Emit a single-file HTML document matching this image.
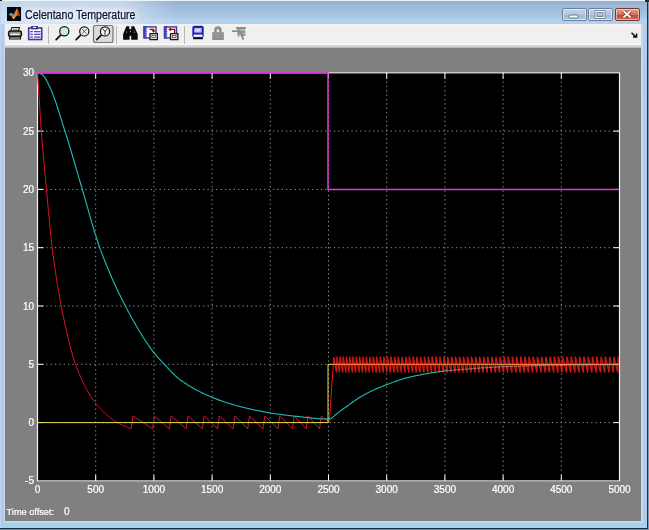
<!DOCTYPE html>
<html><head><meta charset="utf-8"><title>Celentano Temperature</title>
<style>
html,body{margin:0;padding:0;}
body{width:649px;height:530px;overflow:hidden;position:relative;background:#b4d0ee;font-family:"Liberation Sans",sans-serif;}
#frame{position:absolute;left:0;top:0;width:649px;height:530px;background:linear-gradient(#9bb0cc 0px,#9bb2cf 4px,#9cb7d8 5px,#a3c0de 12px,#a9c7e4 17px,#b1cfeb 19px,#b2d1ee 24px,#aecdeb 60px,#acceec 522px,#a4d2ec 527px);}
#bottomline{position:absolute;left:0;top:528px;width:649px;height:1px;background:#16303c;}
#bottomline2{position:absolute;left:0;top:529px;width:649px;height:1px;background:#6e8aa0;}
#rightline{position:absolute;left:647px;top:2px;width:1px;height:527px;background:#1c3444;}
#rightline2{position:absolute;left:648px;top:2px;width:1px;height:528px;background:#7e9ab0;}
#tl{position:absolute;left:0;top:0;width:2px;height:1px;background:#1a2a20;}
#tr{position:absolute;left:645px;top:0;width:4px;height:2px;background:#1c2a3a;}
#topline{position:absolute;left:2px;top:0;width:643px;height:1px;background:#e8f6fa;}
#leftedge{position:absolute;left:0;top:1px;width:1px;height:527px;background:#c2d4f0;}
#innerL{position:absolute;left:3.500px;top:24px;width:1.500px;height:498px;background:#c4d8f0;}
#innerR{position:absolute;left:641px;top:24px;width:2px;height:498px;background:#c4d8f0;}
#innerB{position:absolute;left:4px;top:521px;width:639px;height:2px;background:#c4d8f0;}
#glow{position:absolute;left:1px;top:1px;width:175px;height:23px;background:linear-gradient(90deg,rgba(225,235,248,.62) 0px,rgba(225,235,248,.62) 120px,rgba(225,235,248,0) 175px);}
#title{position:absolute;left:25px;top:7.5px;font-size:12.5px;line-height:15px;color:#0c1030;white-space:nowrap;opacity:0.99;transform:scaleX(0.847);-webkit-text-stroke:0.25px #0c1030;transform-origin:0 0;text-shadow:0 0 5px #fff,0 0 8px #fff,0 0 10px rgba(255,255,255,.9),0 0 14px rgba(255,255,255,.7);}
.cb{position:absolute;top:8px;height:11px;border:1px solid #6f83a0;border-radius:2px;box-shadow:inset 0 0 0 1px rgba(255,255,255,.5);}
#bmin{left:562px;width:23px;background:linear-gradient(#c3d3e6 0%,#b3c7de 50%,#9db6d4 51%,#afc7e0 100%);}
#bmax{left:588px;width:23px;background:linear-gradient(#c3d3e6 0%,#b3c7de 50%,#9db6d4 51%,#afc7e0 100%);}
#bclose{left:615px;width:23px;border-color:#7a3a34;background:linear-gradient(#e2a090 0%,#d4705c 50%,#c2452e 51%,#d06a50 100%);}
#toolbar{position:absolute;left:5px;top:24px;width:636px;height:21px;background:linear-gradient(#f4f2f2 0px,#f2eeec 4px,#f0f0f0 9px,#f0f0f0 19px,#fafafa 20px);}
#tbshadow{position:absolute;left:5px;top:45px;width:636px;height:3px;background:linear-gradient(#dcdcdc,#d2d2d2 66%,#a0a0a0);}
#fig{position:absolute;left:5px;top:48px;width:636px;height:473px;background:#808080;}
#plot{position:absolute;left:0;top:0;}
#icons{position:absolute;left:0;top:0;}
</style></head><body>
<div id="frame"></div><div id="topline"></div><div id="leftedge"></div><div id="bottomline"></div><div id="bottomline2"></div><div id="rightline"></div><div id="rightline2"></div><div id="innerL"></div><div id="innerR"></div><div id="innerB"></div><div id="tl"></div><div id="tr"></div>

<div id="glow"></div>
<div id="title">Celentano Temperature</div>
<div class="cb" id="bmin"></div><div class="cb" id="bmax"></div><div class="cb" id="bclose"></div>
<div id="toolbar"></div><div id="tbshadow"></div>
<div id="fig"></div>
<svg id="plot" width="649" height="530" viewBox="0 0 649 530">
<defs><filter id="gs" x="0" y="0" width="100%" height="100%" filterUnits="userSpaceOnUse" color-interpolation-filters="sRGB"><feColorMatrix type="saturate" values="0"/></filter><clipPath id="pc"><rect x="37" y="72" width="582" height="409.500"/></clipPath></defs>
<rect x="37" y="72.3" width="583" height="409.1" fill="#000"/>
<g stroke="#fff" stroke-width="1" stroke-dasharray="1.2 3.16" opacity="0.62"><line x1="95.7" y1="72.8" x2="95.7" y2="480.9"/><line x1="153.9" y1="72.8" x2="153.9" y2="480.9"/><line x1="212.1" y1="72.8" x2="212.1" y2="480.9"/><line x1="270.3" y1="72.8" x2="270.3" y2="480.9"/><line x1="328.5" y1="72.8" x2="328.5" y2="480.9"/><line x1="386.7" y1="72.8" x2="386.7" y2="480.9"/><line x1="444.9" y1="72.8" x2="444.9" y2="480.9"/><line x1="503.1" y1="72.8" x2="503.1" y2="480.9"/><line x1="561.3" y1="72.8" x2="561.3" y2="480.9"/><line x1="37.5" y1="422.6" x2="619.5" y2="422.6"/><line x1="37.5" y1="364.3" x2="619.5" y2="364.3"/><line x1="37.5" y1="306.0" x2="619.5" y2="306.0"/><line x1="37.5" y1="247.7" x2="619.5" y2="247.7"/><line x1="37.5" y1="189.4" x2="619.5" y2="189.4"/><line x1="37.5" y1="131.1" x2="619.5" y2="131.1"/></g>
<rect x="37.5" y="72.8" width="582" height="408.09999999999997" fill="none" stroke="#f0f0f0" stroke-width="1.2"/>
<g stroke="#fff" stroke-width="1"><line x1="95.7" y1="480.9" x2="95.7" y2="474.9"/><line x1="95.7" y1="72.8" x2="95.7" y2="78.8"/><line x1="153.9" y1="480.9" x2="153.9" y2="474.9"/><line x1="153.9" y1="72.8" x2="153.9" y2="78.8"/><line x1="212.1" y1="480.9" x2="212.1" y2="474.9"/><line x1="212.1" y1="72.8" x2="212.1" y2="78.8"/><line x1="270.3" y1="480.9" x2="270.3" y2="474.9"/><line x1="270.3" y1="72.8" x2="270.3" y2="78.8"/><line x1="328.5" y1="480.9" x2="328.5" y2="474.9"/><line x1="328.5" y1="72.8" x2="328.5" y2="78.8"/><line x1="386.7" y1="480.9" x2="386.7" y2="474.9"/><line x1="386.7" y1="72.8" x2="386.7" y2="78.8"/><line x1="444.9" y1="480.9" x2="444.9" y2="474.9"/><line x1="444.9" y1="72.8" x2="444.9" y2="78.8"/><line x1="503.1" y1="480.9" x2="503.1" y2="474.9"/><line x1="503.1" y1="72.8" x2="503.1" y2="78.8"/><line x1="561.3" y1="480.9" x2="561.3" y2="474.9"/><line x1="561.3" y1="72.8" x2="561.3" y2="78.8"/><line x1="37.5" y1="422.6" x2="43.5" y2="422.6"/><line x1="619.5" y1="422.6" x2="613.5" y2="422.6"/><line x1="37.5" y1="364.3" x2="43.5" y2="364.3"/><line x1="619.5" y1="364.3" x2="613.5" y2="364.3"/><line x1="37.5" y1="306.0" x2="43.5" y2="306.0"/><line x1="619.5" y1="306.0" x2="613.5" y2="306.0"/><line x1="37.5" y1="247.7" x2="43.5" y2="247.7"/><line x1="619.5" y1="247.7" x2="613.5" y2="247.7"/><line x1="37.5" y1="189.4" x2="43.5" y2="189.4"/><line x1="619.5" y1="189.4" x2="613.5" y2="189.4"/><line x1="37.5" y1="131.1" x2="43.5" y2="131.1"/><line x1="619.5" y1="131.1" x2="613.5" y2="131.1"/></g>
<g clip-path="url(#pc)">
<polyline points="37.5,72.8 38.3,85.0 39.1,97.4 39.9,109.7 40.6,121.5 41.4,132.2 42.2,142.1 43.0,151.5 43.8,160.4 44.6,169.1 45.4,177.5 46.1,185.9 46.9,194.4 47.7,203.1 48.5,211.7 49.3,220.2 50.1,228.4 50.9,236.1 51.6,243.3 52.4,249.8 53.2,255.9 54.0,261.7 54.8,267.3 55.6,272.7 56.4,277.9 57.1,282.9 57.9,287.7 58.7,292.3 59.5,296.7 60.3,301.0 61.1,305.1 61.8,309.0 62.6,313.0 63.4,316.8 64.2,320.6 65.0,324.3 65.8,327.9 66.6,331.5 67.3,334.9 68.1,338.3 68.9,341.5 69.7,344.7 70.5,347.7 71.3,350.6 72.1,353.4 72.8,356.1 73.6,358.7 74.4,361.1 75.2,363.3 76.0,365.4 76.8,367.5 77.6,369.5 78.3,371.5 79.1,373.4 79.9,375.3 80.7,377.1 81.5,378.9 82.3,380.6 83.1,382.3 83.8,384.0 84.6,385.6 85.4,387.1 86.2,388.6 87.0,390.1 87.8,391.5 88.6,392.9 89.3,394.2 90.1,395.5 90.9,396.7 91.7,397.9 92.5,399.1 93.3,400.2 94.1,401.2 94.8,402.3 95.6,403.2 96.4,404.2 97.2,405.1 98.0,406.0 98.8,406.9 99.6,407.8 100.3,408.6 101.1,409.4 101.9,410.3 102.7,411.0 103.5,411.8 104.3,412.6 105.0,413.3 105.8,414.0 106.6,414.7 107.4,415.4 108.2,416.0 109.0,416.7 109.8,417.3 110.5,417.9 111.3,418.5 112.1,419.1 112.9,419.7 113.7,420.2 114.5,420.7 115.3,421.2 116.0,421.7 116.8,422.2 117.6,422.7 118.4,423.1 119.2,423.6 120.0,424.0 120.8,424.4 121.5,424.7 122.3,425.1 123.1,425.4 123.9,425.8 124.7,426.1 125.5,426.4 126.3,426.8 127.0,427.1 127.8,427.4 128.6,427.7 129.4,428.1 130.2,428.4 131.0,428.8 133.0,416.0 152.6,428.8 154.4,416.0 169.3,428.8 171.1,416.0 186.2,428.8 188.0,416.0 202.4,428.8 204.2,416.0 217.6,428.8 219.4,416.0 233.1,428.8 234.9,416.0 247.7,428.8 249.5,416.0 263.0,428.8 264.8,416.0 277.9,428.8 279.7,416.0 292.5,428.8 294.3,416.0 306.2,428.8 308.0,416.0 319.5,428.8 321.3,416.0 329.3,422.0 333.8,357.3" fill="none" stroke="#dc1424" stroke-width="1" stroke-linejoin="bevel"/>
<polyline points="333.8,357.3 336.4,372.5 336.9,356.6 339.5,372.5 340.0,356.6 342.7,372.5 343.2,356.6 345.9,372.5 346.4,356.6 349.1,372.5 349.6,356.6 352.4,372.5 352.9,356.6 355.7,372.5 356.2,356.6 359.1,372.5 359.6,356.6 362.4,372.5 362.9,356.6 365.8,372.5 366.3,356.6 369.3,372.5 369.8,356.6 372.7,372.5 373.2,356.6 376.2,372.5 376.7,356.6 379.7,372.5 380.2,356.6 383.3,372.5 383.8,356.6 386.8,372.5 387.3,356.6 390.4,372.5 390.9,356.6 394.1,372.5 394.6,356.6 397.7,372.5 398.2,356.6 401.4,372.5 401.9,356.6 405.1,372.5 405.6,356.6 408.8,372.5 409.3,356.6 412.6,372.5 413.1,356.6 416.3,372.5 416.8,356.6 420.1,372.5 420.6,356.6 423.9,372.5 424.4,356.6 427.8,372.5 428.3,356.6 431.6,372.5 432.1,356.6 435.5,372.5 436.0,356.6 439.4,372.5 439.9,356.6 443.3,372.5 443.8,356.6 447.2,372.5 447.7,356.6 451.1,372.5 451.6,356.6 455.1,372.5 455.6,356.6 459.0,372.5 459.5,356.6 463.0,372.5 463.5,356.6 467.0,372.5 467.5,356.6 471.0,372.5 471.5,356.6 475.1,372.5 475.6,356.6 479.1,372.5 479.6,356.6 483.2,372.5 483.7,356.6 487.2,372.5 487.7,356.6 491.3,372.5 491.8,356.6 495.4,372.5 495.9,356.6 499.5,372.5 500.0,356.6 503.6,372.5 504.1,356.6 507.7,372.5 508.2,356.6 511.9,372.5 512.4,356.6 516.0,372.5 516.5,356.6 520.2,372.5 520.7,356.6 524.3,372.5 524.8,356.6 528.5,372.5 529.0,356.6 532.7,372.5 533.2,356.6 536.9,372.5 537.4,356.6 541.1,372.5 541.6,356.6 545.3,372.5 545.8,356.6 549.5,372.5 550.0,356.6 553.7,372.5 554.2,356.6 557.9,372.5 558.4,356.6 562.1,372.5 562.6,356.6 566.4,372.5 566.9,356.6 570.6,372.5 571.1,356.6 574.9,372.5 575.4,356.6 579.1,372.5 579.6,356.6 583.4,372.5 583.9,356.6 587.7,372.5 588.2,356.6 591.9,372.5 592.4,356.6 596.2,372.5 596.7,356.6 600.5,372.5 601.0,356.6 604.8,372.5 605.3,356.6 609.1,372.5 609.6,356.6 613.4,372.5 613.9,356.6 617.7,372.5 618.2,356.6 619.5,362.2" fill="none" stroke="#e01616" stroke-width="1.35" stroke-linejoin="bevel" opacity="0.92"/>
<polyline points="37.5,422.59999999999997 328.0,422.59999999999997 328.0,364.3 333.156,364.3" fill="none" stroke="#e6dc48" stroke-width="1"/>
<polyline points="333.156,364.3 619.5,364.3" fill="none" stroke="#ffb040" stroke-width="1" opacity="0.9"/>
<polyline points="37.5,72.8 38.1,73.0 38.8,73.2 39.4,73.4 40.1,73.6 40.7,73.9 41.4,74.1 42.0,74.5 42.7,74.9 43.3,75.5 44.0,76.3 44.6,77.2 45.3,78.2 45.9,79.4 46.6,80.5 47.2,81.8 47.9,83.1 48.5,84.4 49.2,85.7 49.8,87.0 50.4,88.4 51.1,89.8 51.7,91.4 52.4,93.0 53.0,94.7 53.7,96.4 54.3,98.2 55.0,100.0 55.6,101.9 56.3,103.8 56.9,105.7 57.6,107.7 58.2,109.7 58.9,111.7 59.5,113.8 60.2,115.8 60.8,117.9 61.5,120.0 62.1,122.0 62.7,124.1 63.4,126.2 64.0,128.2 64.7,130.2 65.3,132.2 66.0,134.3 66.6,136.3 67.3,138.4 67.9,140.5 68.6,142.6 69.2,144.8 69.9,146.9 70.5,149.1 71.2,151.3 71.8,153.4 72.5,155.6 73.1,157.9 73.8,160.1 74.4,162.3 75.0,164.5 75.7,166.8 76.3,169.0 77.0,171.2 77.6,173.5 78.3,175.7 78.9,177.9 79.6,180.1 80.2,182.3 80.9,184.5 81.5,186.7 82.2,188.9 82.8,191.1 83.5,193.3 84.1,195.5 84.8,197.8 85.4,200.0 86.1,202.3 86.7,204.6 87.3,206.9 88.0,209.1 88.6,211.4 89.3,213.7 89.9,216.0 90.6,218.3 91.2,220.5 91.9,222.8 92.5,225.0 93.2,227.2 93.8,229.4 94.5,231.5 95.1,233.7 95.8,235.7 96.4,237.8 97.1,239.8 97.7,241.8 98.4,243.7 99.0,245.5 99.6,247.4 100.3,249.1 100.9,250.9 101.6,252.6 102.2,254.3 102.9,256.0 103.5,257.7 104.2,259.4 104.8,261.0 105.5,262.6 106.1,264.3 106.8,265.9 107.4,267.4 108.1,269.0 108.7,270.6 109.4,272.1 110.0,273.6 110.7,275.1 111.3,276.6 111.9,278.1 112.6,279.6 113.2,281.0 113.9,282.4 114.5,283.9 115.2,285.3 115.8,286.7 116.5,288.1 117.1,289.4 117.8,290.8 118.4,292.2 119.1,293.5 119.7,294.8 120.4,296.1 121.0,297.4 121.7,298.7 122.3,300.0 123.0,301.3 123.6,302.6 124.2,303.8 124.9,305.1 125.5,306.3 126.2,307.5 126.8,308.8 127.5,310.0 128.1,311.2 128.8,312.4 129.4,313.6 130.1,314.8 130.7,316.0 131.4,317.2 132.0,318.3 132.7,319.5 133.3,320.7 134.0,321.8 134.6,322.9 135.3,324.1 135.9,325.2 136.6,326.3 137.2,327.4 137.8,328.5 138.5,329.6 139.1,330.7 139.8,331.8 140.4,332.8 141.1,333.9 141.7,334.9 142.4,336.0 143.0,337.0 143.7,338.0 144.3,339.0 145.0,340.0 145.6,341.0 146.3,342.0 146.9,342.9 147.6,343.9 148.2,344.8 148.9,345.8 149.5,346.7 150.1,347.6 150.8,348.5 151.4,349.4 152.1,350.3 152.7,351.1 153.4,352.0 154.0,352.8 154.7,353.6 155.3,354.4 156.0,355.2 156.6,356.0 157.3,356.7 157.9,357.4 158.6,358.2 159.2,358.9 159.9,359.6 160.5,360.2 161.2,360.9 161.8,361.6 162.4,362.3 163.1,363.0 163.7,363.6 164.4,364.3 165.0,365.0 165.7,365.7 166.3,366.4 167.0,367.1 167.6,367.8 168.3,368.5 168.9,369.2 169.6,369.9 170.2,370.6 170.9,371.2 171.5,371.9 172.2,372.6 172.8,373.3 173.5,373.9 174.1,374.5 174.7,375.2 175.4,375.8 176.0,376.4 176.7,377.0 177.3,377.5 178.0,378.1 178.6,378.6 179.3,379.1 179.9,379.6 180.6,380.1 181.2,380.5 181.9,381.0 182.5,381.4 183.2,381.9 183.8,382.3 184.5,382.8 185.1,383.2 185.8,383.6 186.4,384.0 187.0,384.5 187.7,384.9 188.3,385.3 189.0,385.7 189.6,386.1 190.3,386.5 190.9,386.8 191.6,387.2 192.2,387.6 192.9,388.0 193.5,388.3 194.2,388.7 194.8,389.1 195.5,389.4 196.1,389.8 196.8,390.1 197.4,390.5 198.1,390.8 198.7,391.1 199.3,391.5 200.0,391.8 200.6,392.1 201.3,392.4 201.9,392.8 202.6,393.1 203.2,393.4 203.9,393.7 204.5,394.0 205.2,394.3 205.8,394.6 206.5,394.9 207.1,395.2 207.8,395.4 208.4,395.7 209.1,396.0 209.7,396.3 210.4,396.6 211.0,396.8 211.6,397.1 212.3,397.4 212.9,397.6 213.6,397.9 214.2,398.2 214.9,398.4 215.5,398.7 216.2,398.9 216.8,399.2 217.5,399.4 218.1,399.7 218.8,399.9 219.4,400.1 220.1,400.4 220.7,400.6 221.4,400.8 222.0,401.1 222.7,401.3 223.3,401.5 223.9,401.7 224.6,402.0 225.2,402.2 225.9,402.4 226.5,402.6 227.2,402.8 227.8,403.0 228.5,403.2 229.1,403.4 229.8,403.6 230.4,403.8 231.1,404.0 231.7,404.2 232.4,404.4 233.0,404.6 233.7,404.8 234.3,405.0 235.0,405.2 235.6,405.3 236.2,405.5 236.9,405.7 237.5,405.9 238.2,406.0 238.8,406.2 239.5,406.4 240.1,406.5 240.8,406.7 241.4,406.9 242.1,407.0 242.7,407.2 243.4,407.4 244.0,407.5 244.7,407.7 245.3,407.8 246.0,408.0 246.6,408.2 247.3,408.3 247.9,408.5 248.5,408.6 249.2,408.8 249.8,408.9 250.5,409.1 251.1,409.2 251.8,409.4 252.4,409.5 253.1,409.6 253.7,409.8 254.4,409.9 255.0,410.1 255.7,410.2 256.3,410.3 257.0,410.5 257.6,410.6 258.3,410.7 258.9,410.9 259.6,411.0 260.2,411.1 260.8,411.2 261.5,411.4 262.1,411.5 262.8,411.6 263.4,411.7 264.1,411.9 264.7,412.0 265.4,412.1 266.0,412.2 266.7,412.3 267.3,412.4 268.0,412.5 268.6,412.6 269.3,412.8 269.9,412.9 270.6,413.0 271.2,413.1 271.9,413.2 272.5,413.3 273.1,413.4 273.8,413.5 274.4,413.6 275.1,413.7 275.7,413.8 276.4,413.9 277.0,414.0 277.7,414.0 278.3,414.1 279.0,414.2 279.6,414.3 280.3,414.4 280.9,414.5 281.6,414.6 282.2,414.7 282.9,414.8 283.5,414.8 284.2,414.9 284.8,415.0 285.4,415.1 286.1,415.2 286.7,415.2 287.4,415.3 288.0,415.4 288.7,415.5 289.3,415.6 290.0,415.6 290.6,415.7 291.3,415.8 291.9,415.9 292.6,415.9 293.2,416.0 293.9,416.1 294.5,416.1 295.2,416.2 295.8,416.3 296.5,416.4 297.1,416.4 297.7,416.5 298.4,416.6 299.0,416.6 299.7,416.7 300.3,416.8 301.0,416.8 301.6,416.9 302.3,417.0 302.9,417.1 303.6,417.1 304.2,417.2 304.9,417.3 305.5,417.4 306.2,417.4 306.8,417.5 307.5,417.6 308.1,417.7 308.8,417.7 309.4,417.8 310.0,417.9 310.7,417.9 311.3,418.0 312.0,418.1 312.6,418.2 313.3,418.2 313.9,418.3 314.6,418.3 315.2,418.4 315.9,418.5 316.5,418.5 317.2,418.6 317.8,418.6 318.5,418.7 319.1,418.7 319.8,418.8 320.4,418.8 321.1,418.9 321.7,418.9 322.3,418.9 323.0,419.0 323.6,419.0 324.3,419.0 324.9,419.0 325.6,419.1 326.2,419.1 326.9,419.1 327.5,419.1 328.2,419.1 328.8,419.1 329.5,419.0 330.1,418.9 330.8,418.6 331.4,418.2 332.1,417.7 332.7,417.1 333.4,416.6 334.0,416.1 334.7,415.6 335.3,415.0 335.9,414.5 336.6,413.9 337.2,413.4 337.9,412.9 338.5,412.4 339.2,411.9 339.8,411.4 340.5,410.9 341.1,410.4 341.8,410.0 342.4,409.5 343.1,409.0 343.7,408.6 344.4,408.1 345.0,407.6 345.7,407.2 346.3,406.7 347.0,406.3 347.6,405.8 348.2,405.3 348.9,404.9 349.5,404.4 350.2,403.9 350.8,403.5 351.5,403.0 352.1,402.5 352.8,402.0 353.4,401.6 354.1,401.1 354.7,400.6 355.4,400.2 356.0,399.7 356.7,399.3 357.3,398.9 358.0,398.5 358.6,398.0 359.3,397.6 359.9,397.3 360.5,396.9 361.2,396.5 361.8,396.1 362.5,395.7 363.1,395.4 363.8,395.0 364.4,394.6 365.1,394.3 365.7,393.9 366.4,393.6 367.0,393.2 367.7,392.9 368.3,392.6 369.0,392.2 369.6,391.9 370.3,391.6 370.9,391.3 371.6,391.0 372.2,390.7 372.8,390.4 373.5,390.1 374.1,389.8 374.8,389.5 375.4,389.2 376.1,388.9 376.7,388.6 377.4,388.4 378.0,388.1 378.7,387.8 379.3,387.5 380.0,387.3 380.6,387.0 381.3,386.7 381.9,386.5 382.6,386.2 383.2,385.9 383.9,385.7 384.5,385.4 385.1,385.2 385.8,384.9 386.4,384.7 387.1,384.4 387.7,384.2 388.4,384.0 389.0,383.7 389.7,383.5 390.3,383.2 391.0,383.0 391.6,382.7 392.3,382.5 392.9,382.3 393.6,382.0 394.2,381.8 394.9,381.6 395.5,381.3 396.2,381.1 396.8,380.9 397.4,380.7 398.1,380.4 398.7,380.2 399.4,380.0 400.0,379.8 400.7,379.6 401.3,379.4 402.0,379.2 402.6,379.0 403.3,378.8 403.9,378.6 404.6,378.4 405.2,378.3 405.9,378.1 406.5,377.9 407.2,377.7 407.8,377.6 408.5,377.4 409.1,377.2 409.7,377.1 410.4,376.9 411.0,376.8 411.7,376.6 412.3,376.5 413.0,376.3 413.6,376.2 414.3,376.1 414.9,375.9 415.6,375.8 416.2,375.6 416.9,375.5 417.5,375.4 418.2,375.2 418.8,375.1 419.5,375.0 420.1,374.9 420.8,374.7 421.4,374.6 422.0,374.5 422.7,374.4 423.3,374.3 424.0,374.1 424.6,374.0 425.3,373.9 425.9,373.8 426.6,373.7 427.2,373.6 427.9,373.5 428.5,373.3 429.2,373.2 429.8,373.1 430.5,373.0 431.1,372.9 431.8,372.8 432.4,372.7 433.1,372.6 433.7,372.5 434.3,372.4 435.0,372.3 435.6,372.2 436.3,372.1 436.9,372.0 437.6,371.9 438.2,371.8 438.9,371.7 439.5,371.6 440.2,371.5 440.8,371.4 441.5,371.4 442.1,371.3 442.8,371.2 443.4,371.1 444.1,371.0 444.7,371.0 445.4,370.9 446.0,370.8 446.6,370.8" fill="none" stroke="#1cbcb4" stroke-width="1.15"/>
<polyline points="446.0,370.8 446.6,370.8 447.3,370.7 447.9,370.6 448.6,370.6 449.2,370.5 449.9,370.4 450.5,370.4 451.2,370.3 451.8,370.3 452.5,370.2 453.1,370.1 453.8,370.1 454.4,370.0 455.1,370.0 455.7,369.9 456.4,369.9 457.0,369.8 457.7,369.8 458.3,369.7 458.9,369.7 459.6,369.6 460.2,369.6 460.9,369.5 461.5,369.5 462.2,369.4 462.8,369.4 463.5,369.3 464.1,369.3 464.8,369.2 465.4,369.2 466.1,369.1 466.7,369.1 467.4,369.0 468.0,369.0 468.7,368.9 469.3,368.9 470.0,368.8 470.6,368.7 471.2,368.7 471.9,368.6 472.5,368.6 473.2,368.5 473.8,368.5 474.5,368.4 475.1,368.4 475.8,368.3 476.4,368.3 477.1,368.2 477.7,368.2 478.4,368.1 479.0,368.1 479.7,368.1 480.3,368.0 481.0,368.0 481.6,367.9 482.3,367.9 482.9,367.9 483.5,367.8 484.2,367.8 484.8,367.7 485.5,367.7 486.1,367.7 486.8,367.6 487.4,367.6 488.1,367.5 488.7,367.5 489.4,367.5 490.0,367.4 490.7,367.4 491.3,367.3 492.0,367.3 492.6,367.3 493.3,367.2 493.9,367.2 494.6,367.2 495.2,367.1 495.8,367.1 496.5,367.1 497.1,367.0 497.8,367.0 498.4,366.9 499.1,366.9 499.7,366.9 500.4,366.8 501.0,366.8 501.7,366.8 502.3,366.7 503.0,366.7 503.6,366.7 504.3,366.7 504.9,366.6 505.6,366.6 506.2,366.6 506.9,366.5 507.5,366.5 508.1,366.5 508.8,366.4 509.4,366.4 510.1,366.4 510.7,366.4 511.4,366.3 512.0,366.3 512.7,366.3 513.3,366.3 514.0,366.2 514.6,366.2 515.3,366.2 515.9,366.2 516.6,366.1 517.2,366.1 517.9,366.1 518.5,366.1 519.2,366.1 519.8,366.0 520.4,366.0 521.1,366.0 521.7,366.0 522.4,366.0 523.0,365.9 523.7,365.9 524.3,365.9 525.0,365.9 525.6,365.9 526.3,365.8 526.9,365.8 527.6,365.8 528.2,365.8 528.9,365.8 529.5,365.8 530.2,365.7 530.8,365.7 531.5,365.7 532.1,365.7 532.8,365.7 533.4,365.6 534.0,365.6 534.7,365.6 535.3,365.6 536.0,365.6 536.6,365.6 537.3,365.6 537.9,365.5 538.6,365.5 539.2,365.5 539.9,365.5 540.5,365.5 541.2,365.5 541.8,365.4 542.5,365.4 543.1,365.4 543.8,365.4 544.4,365.4 545.1,365.4 545.7,365.4 546.3,365.4 547.0,365.3 547.6,365.3 548.3,365.3 548.9,365.3 549.6,365.3 550.2,365.3 550.9,365.3 551.5,365.3 552.2,365.2 552.8,365.2 553.5,365.2 554.1,365.2 554.8,365.2 555.4,365.2 556.1,365.2 556.7,365.2 557.4,365.2 558.0,365.2 558.6,365.2 559.3,365.1 559.9,365.1 560.6,365.1 561.2,365.1 561.9,365.1 562.5,365.1 563.2,365.1 563.8,365.1 564.5,365.1 565.1,365.1 565.8,365.1 566.4,365.1 567.1,365.1 567.7,365.0 568.4,365.0 569.0,365.0 569.7,365.0 570.3,365.0 570.9,365.0 571.6,365.0 572.2,365.0 572.9,365.0 573.5,365.0 574.2,365.0 574.8,365.0 575.5,365.0 576.1,365.0 576.8,365.0 577.4,365.0 578.1,364.9 578.7,364.9 579.4,364.9 580.0,364.9 580.7,364.9 581.3,364.9 582.0,364.9 582.6,364.9 583.2,364.9 583.9,364.9 584.5,364.9 585.2,364.9 585.8,364.9 586.5,364.9 587.1,364.9 587.8,364.9 588.4,364.9 589.1,364.9 589.7,364.9 590.4,364.9 591.0,364.8 591.7,364.8 592.3,364.8 593.0,364.8 593.6,364.8 594.3,364.8 594.9,364.8 595.5,364.8 596.2,364.8 596.8,364.8 597.5,364.8 598.1,364.8 598.8,364.8 599.4,364.8 600.1,364.8 600.7,364.8 601.4,364.8 602.0,364.8 602.7,364.8 603.3,364.8 604.0,364.8 604.6,364.8 605.3,364.8 605.9,364.7 606.6,364.7 607.2,364.7 607.8,364.7 608.5,364.7 609.1,364.7 609.8,364.7 610.4,364.7 611.1,364.7 611.7,364.7 612.4,364.7 613.0,364.7 613.7,364.7 614.3,364.7 615.0,364.7 615.6,364.7 616.3,364.7 616.9,364.7 617.6,364.7 618.2,364.7 618.9,364.7 619.5,364.6" fill="none" stroke="#a0b8bc" stroke-width="1.1" opacity="0.55"/>
<polyline points="37.5,72.80000000000001 328.0,72.80000000000001 328.0,189.39999999999998 619.5,189.39999999999998" fill="none" stroke="#dc38d4" stroke-width="1.5"/>
</g>
<g filter="url(#gs)" fill="#fff" stroke="#fff" stroke-width="0.22" font-family="Liberation Sans, sans-serif" font-size="10"><text x="37.5" y="493" text-anchor="middle">0</text><text x="95.7" y="493" text-anchor="middle">500</text><text x="153.9" y="493" text-anchor="middle">1000</text><text x="212.1" y="493" text-anchor="middle">1500</text><text x="270.3" y="493" text-anchor="middle">2000</text><text x="328.5" y="493" text-anchor="middle">2500</text><text x="386.7" y="493" text-anchor="middle">3000</text><text x="444.9" y="493" text-anchor="middle">3500</text><text x="503.1" y="493" text-anchor="middle">4000</text><text x="561.3" y="493" text-anchor="middle">4500</text><text x="619.5" y="493" text-anchor="middle">5000</text><text x="34" y="484.4" text-anchor="end">-5</text><text x="34" y="426.1" text-anchor="end">0</text><text x="34" y="367.8" text-anchor="end">5</text><text x="34" y="309.5" text-anchor="end">10</text><text x="34" y="251.2" text-anchor="end">15</text><text x="34" y="192.9" text-anchor="end">20</text><text x="34" y="134.6" text-anchor="end">25</text><text x="34" y="76.3" text-anchor="end">30</text>
<text x="6.600" y="515" font-size="9.2">Time offset:</text><text x="64" y="515">0</text></g>
</svg>
<svg id="icons" width="649" height="60" viewBox="0 0 649 60">
<!-- matlab logo -->
<g>
<rect x="7" y="7" width="14" height="14" fill="#04060f"/>
<path d="M8.5 14.6 L11.2 12.8 L13.6 14.4 L11.4 16.2 Z" fill="#4aa8c8"/>
<path d="M11.4 16.2 L13.6 14.4 C15 12.5 16 9.2 17.2 8.2 C18 9.8 19 13.5 20 16.2 C18.6 15.2 17.6 15 16.6 16 C15.4 17.4 14.2 18.8 13.2 19.2 C12.8 18 12.2 17 11.4 16.2 Z" fill="#e8792a"/>
<path d="M17.2 8.2 C18 9.8 19 13.5 20 16.2 C18.9 15.3 18.2 15 17.4 15.3 C17.6 12.6 17.4 10 17.2 8.2 Z" fill="#a8360c"/>
<path d="M12.4 16.8 C13.2 16.6 14 17.2 14.2 18.2 L13.2 19.2 C12.9 18.2 12.7 17.5 12.4 16.8Z" fill="#ffd890"/>
</g>
<!-- printer -->
<g>
<path d="M12 27.5 H19.5 L18.2 31.5 H10.5 Z" fill="#f0f0f0" stroke="#1a1a1a" stroke-width="1.1"/>
<path d="M13 29.2 H17.5" stroke="#777" stroke-width="0.9"/>
<rect x="8.5" y="31" width="13" height="5.500" rx="2" fill="#8c8c84" stroke="#111" stroke-width="1.300"/>
<rect x="10.500" y="33.500" width="9" height="1.500" fill="#ecebd8"/>
<path d="M9.500 37 H20.500 V39 H9.500 Z" fill="#dcdcdc" stroke="#111" stroke-width="1.100"/>
</g>
<!-- params clipboard -->
<g>
<rect x="28.700" y="28" width="13" height="11.500" fill="#fff" stroke="#3a3898" stroke-width="1.600"/>
<rect x="31" y="26" width="7" height="3.400" fill="#3a3898"/>
<rect x="33" y="26.800" width="3" height="1.200" fill="#e8e8ff"/>
<rect x="30.300" y="31" width="2.600" height="1.300" fill="#6a3a8a"/>
<rect x="34" y="31" width="6.500" height="1.300" fill="#4a4ab8"/>
<rect x="30.300" y="33.700" width="2.600" height="1.300" fill="#6a3a8a"/>
<rect x="34" y="33.700" width="6.500" height="1.300" fill="#4a4ab8"/>
<rect x="30.300" y="36.400" width="2.600" height="1.300" fill="#6a3a8a"/>
<rect x="34" y="36.400" width="6.500" height="1.300" fill="#4a4ab8"/>
</g>
<line x1="48.5" y1="26" x2="48.5" y2="44" stroke="#b8b8b8"/>
<!-- pressed button bg -->
<rect x="93.5" y="25.5" width="19.5" height="17" rx="2" fill="#dedad8" stroke="#757575" stroke-width="1.2"/>
<!-- magnifiers -->
<g stroke="#111" fill="none" stroke-linecap="round">
<line x1="60.6" y1="35.2" x2="56.2" y2="39.6" stroke-width="1.8"/>
<circle cx="64.3" cy="31.3" r="4.6" fill="#c4ecec" stroke-width="1.2"/>
<line x1="80.6" y1="35.2" x2="76.2" y2="39.6" stroke-width="1.8"/>
<circle cx="84.3" cy="31.4" r="4.6" fill="#e8f4fa" stroke-width="1.2"/>
<path d="M82.2 29.3 L86.4 33.5 M86.4 29.3 L82.2 33.5" stroke="#3a4a9a" stroke-width="0.9"/>
<line x1="101.2" y1="35.2" x2="96.8" y2="39.6" stroke-width="1.8"/>
<circle cx="105" cy="31.4" r="4.6" fill="#e8f4fa" stroke-width="1.2"/>
<path d="M102.8 28.8 L105 31.4 L107.2 28.8 M105 31.4 V35" stroke="#1a2050" stroke-width="0.9"/>
</g>
<line x1="116.5" y1="26" x2="116.5" y2="44" stroke="#b8b8b8"/>
<!-- binoculars -->
<g fill="#0a0a0a">
<path d="M126.400 26.200 h2.900 v3 h0.800 v6.600 l-0.500 0 v4 h-6.500 v-5.500 l1.800 -4.600 z"/>
<path d="M131.300 26.200 h2.900 l1.500 3.500 l2 4.600 v5.500 h-6.500 v-4 h-0.500 v-6.600 h0.600 z"/>
<rect x="129" y="29.400" width="3" height="6.400"/>
<rect x="126" y="31.500" width="1" height="1.200" fill="#999"/>
<rect x="130" y="31" width="1" height="1.200" fill="#aaa"/>
<rect x="134" y="31.500" width="1" height="1.200" fill="#999"/>
</g>
<!-- save axes -->
<g>
<rect x="144" y="26.900" width="12" height="11" fill="#fbfbff" stroke="#3a38a8" stroke-width="1.400"/>
<rect x="143.400" y="26" width="3.200" height="12.500" fill="#4040b0"/>
<path d="M146.600 28.500 h-1.200 M146.600 30.500 h-1.200 M146.600 32.500 h-1.200 M146.600 34.500 h-1.200 M146.600 36.500 h-1.200" stroke="#b8b8f0" stroke-width="0.700"/>
<path d="M149.500 29.300 H153.500 V31.200" stroke="#7a1010" stroke-width="1.300" fill="none"/>
<path d="M151.300 30.200 H155.700 L153.500 32.800 Z" fill="#a01010"/>
<rect x="150" y="33.600" width="7.400" height="6" fill="#e4e4e4" stroke="#1a1a1a" stroke-width="1.300"/>
<rect x="151.900" y="35.600" width="3.600" height="2" fill="#fff" stroke="#333" stroke-width="0.700"/>
</g>
<!-- restore axes -->
<g>
<rect x="164.500" y="26.900" width="12" height="11" fill="#fbfbff" stroke="#3a38a8" stroke-width="1.400"/>
<rect x="163.900" y="26" width="3.200" height="12.500" fill="#4040b0"/>
<path d="M167.100 28.500 h-1.200 M167.100 30.500 h-1.200 M167.100 32.500 h-1.200 M167.100 34.500 h-1.200 M167.100 36.500 h-1.200" stroke="#b8b8f0" stroke-width="0.700"/>
<path d="M170 29.300 H174.600 V33" stroke="#7a1010" stroke-width="1.300" fill="none"/>
<path d="M171 27.200 V31.400 L168.300 29.300 Z" fill="#a01010"/>
<rect x="170.500" y="33.600" width="7.400" height="6" fill="#e4e4e4" stroke="#1a1a1a" stroke-width="1.300"/>
<rect x="172.400" y="35.600" width="3.600" height="2" fill="#fff" stroke="#333" stroke-width="0.700"/>
</g>
<line x1="184.500" y1="26" x2="184.500" y2="44" stroke="#b8b8b8"/>
<!-- floating scope -->
<g>
<rect x="192.300" y="25.800" width="11.400" height="12" rx="2" fill="#2020b0"/>
<rect x="194.300" y="28" width="7.400" height="4.600" fill="#b4c4f0"/>
<path d="M195 31.500 l1.500 -1.500 l1.500 1 l2 -2" stroke="#fff" stroke-width="0.800" fill="none"/>
<rect x="193.600" y="34.600" width="8.800" height="2.300" fill="#f6f6f6"/>
<rect x="193" y="37.300" width="10" height="2" rx="0.900" fill="#0c0c14"/>
</g>
<!-- lock (disabled) -->
<g>
<path d="M214.200 32.500 V29.800 a3.700 3.600 0 0 1 7.400 0 V32.500 h-2.600 v-2.300 a1.100 1.100 0 0 0 -2.200 0 V32.500 z" fill="#8e8e8e"/>
<rect x="212.200" y="32.200" width="11.600" height="7.800" fill="#8c8c8c"/>
<rect x="213.300" y="34.300" width="9.400" height="0.900" fill="#a4a4a4"/>
<rect x="213.300" y="36.700" width="9.400" height="0.900" fill="#a4a4a4"/>
</g>
<!-- signal selector (disabled) -->
<g stroke="#8c8c8c" fill="none" stroke-width="1.800">
<rect x="237.500" y="29" width="7.500" height="6" fill="#b4b4b4" stroke="none"/>
<path d="M232 31.200 H238 M236 28 H245.800 M238.600 28 V36.500 M238.600 31.800 H245.500 M240.500 34.800 H245.500"/>
<path d="M241 33 L243.300 39.600" stroke-width="2"/>
</g>
<!-- dock arrow -->
<path d="M631.500 32.800 L635.600 36.600 M636.600 33.400 V37 H633" stroke="#111" stroke-width="1.500" fill="none"/>
<!-- caption glyphs -->
<rect x="569" y="15" width="9" height="3" rx="0.8" fill="#fff" stroke="#5a6a80" stroke-width="0.9"/>
<rect x="596" y="11.500" width="8" height="6" fill="none" stroke="#5a6a80" stroke-width="2.600"/>
<rect x="596" y="11.500" width="8" height="6" fill="none" stroke="#fff" stroke-width="1.200"/>
<path d="M623.500 11 L630.500 17.500 M630.500 11 L623.500 17.500" stroke="#7a2a20" stroke-width="3.200" />
<path d="M623.500 11 L630.500 17.500 M630.500 11 L623.500 17.500" stroke="#fff" stroke-width="1.800" />
</svg>

</body></html>
